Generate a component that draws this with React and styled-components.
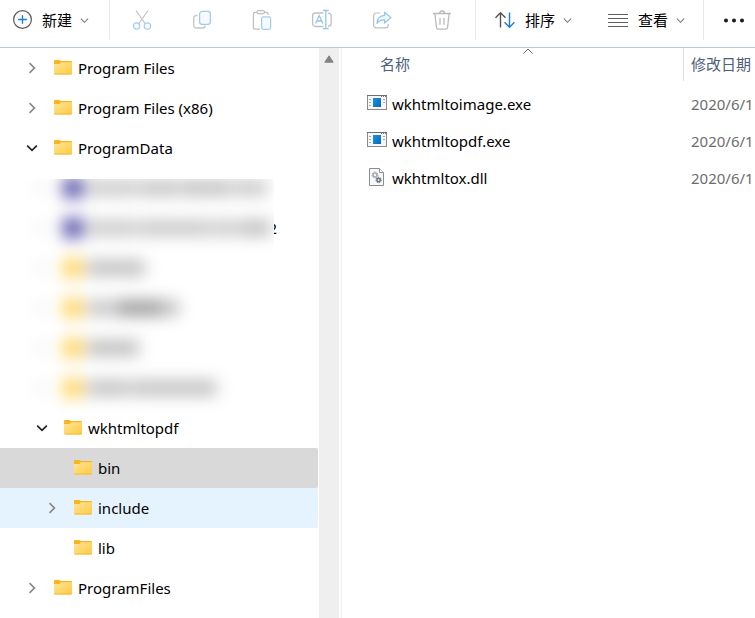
import React, { useState } from 'react';
import styled, { createGlobalStyle, css } from 'styled-components';

const treeTop = [
  { id: 'pf', name: 'Program Files', level: 0, state: 'closed' },
  { id: 'pf86', name: 'Program Files (x86)', level: 0, state: 'closed' },
  { id: 'pd', name: 'ProgramData', level: 0, state: 'open' },
];

const treeBottom = [
  { id: 'wk', name: 'wkhtmltopdf', level: 1, state: 'open' },
  { id: 'bin', name: 'bin', level: 2, state: 'none' },
  { id: 'include', name: 'include', level: 2, state: 'closed', hovered: true },
  { id: 'lib', name: 'lib', level: 2, state: 'none' },
  { id: 'pfs', name: 'ProgramFiles', level: 0, state: 'closed' },
];

// hidden entries: icon tint and word lengths
const hiddenRows = [
  { tint: '#5a54aa', words: [[52, '#cacaca'], [38, '#c4c4c4'], [50, '#c2c2c2'], [34, '#cacaca']] },
  { tint: '#5a54aa', words: [[50, '#cacaca'], [72, '#c8c8c8'], [24, '#cacaca'], [32, '#c0c0c0']] },
  { tint: '#ffd668', words: [[58, '#c0c0c0']] },
  { tint: '#ffd668', words: [[28, '#c6c6c6'], [46, '#9c9c9c'], [14, '#bcbcbc']] },
  { tint: '#ffd668', words: [[52, '#bebebe']] },
  { tint: '#ffd668', words: [[42, '#c2c2c2'], [86, '#c2c2c2']] },
];

const files = [
  { name: 'wkhtmltoimage.exe', kind: 'exe', date: '2020/6/1' },
  { name: 'wkhtmltopdf.exe', kind: 'exe', date: '2020/6/1' },
  { name: 'wkhtmltox.dll', kind: 'dll', date: '2020/6/1' },
];

const Chevron = ({ dir = 'down', size = 9, color = '#777', width = 1.2 }) => {
  const paths = {
    down: 'M1 3 L5 7 L9 3',
    right: 'M3 1 L7 5 L3 9',
  };
  return (
    <svg width={size} height={size} viewBox="0 0 10 10" fill="none" stroke={color} strokeWidth={width} aria-hidden="true">
      <path d={paths[dir]} />
    </svg>
  );
};

const SortCaret = () => (
  <svg width="10" height="6" viewBox="0 0 10 6" fill="none" stroke="#666" aria-hidden="true">
    <path d="M0.5 5.5L5 1L9.5 5.5" />
  </svg>
);

const NewIcon = () => (
  <svg width="20" height="20" viewBox="0 0 20 20" fill="none" aria-hidden="true">
    <circle cx="10.5" cy="9.5" r="8.9" stroke="#5a5a5a" strokeWidth="1.2" fill="#fafafa" />
    <path d="M10.5 5.2v8.6M6.2 9.5h8.6" stroke="#1a7fd4" strokeWidth="1.3" />
  </svg>
);

const CutIcon = () => (
  <svg width="20" height="20" viewBox="0 0 20 20" fill="none" strokeWidth="1.2" aria-hidden="true">
    <path d="M4 0.5 L13 13.5 M16 0.5 L7 13.5" stroke="#c3c3c3" />
    <circle cx="4.6" cy="16" r="3.2" stroke="#9fcdf0" fill="#f4faff" />
    <circle cx="15.4" cy="16" r="3.2" stroke="#9fcdf0" fill="#f4faff" />
  </svg>
);

const CopyIcon = () => (
  <svg width="20" height="20" viewBox="0 0 20 20" fill="none" strokeWidth="1.3" aria-hidden="true">
    <path d="M5.5 5.5H4.3a2.6 2.6 0 0 0-2.6 2.6v7.3a2.6 2.6 0 0 0 2.6 2.6h6.4a2.6 2.6 0 0 0 2.6-2.4" stroke="#c6c6c6" />
    <rect x="7.6" y="1.4" width="10.8" height="13" rx="2.6" stroke="#9fcdf0" fill="#f6fafe" />
  </svg>
);

const PasteIcon = () => (
  <svg width="20" height="20" viewBox="0 0 20 20" fill="none" strokeWidth="1.2" aria-hidden="true">
    <path d="M8 19.2H3a1.6 1.6 0 0 1-1.6-1.6V4A1.6 1.6 0 0 1 3 2.4H5M12.5 2.4H14.5A1.6 1.6 0 0 1 16 4v1" stroke="#bdbdbd" />
    <rect x="5" y="0.7" width="7.5" height="3" rx="1.5" stroke="#bdbdbd" />
    <rect x="9.6" y="6.8" width="9" height="12.5" rx="1.8" stroke="#9fcdf0" fill="#f6fafe" />
  </svg>
);

const RenameIcon = () => (
  <svg width="22" height="22" viewBox="0 0 22 22" fill="none" strokeWidth="1.3" aria-hidden="true">
    <path d="M12.5 4H4.5A3 3 0 0 0 1.6 7v7.5a3 3 0 0 0 3 3h8M17 4.2A3.2 3.2 0 0 1 20.2 7.3v6.9A3.2 3.2 0 0 1 17 17.3" stroke="#c0c0c0" />
    <path d="M4.6 14.5L8.2 6.5L11.8 14.5M5.8 12h4.8" stroke="#93c6ee" />
    <path d="M12 1.5h5.6M12 19.7h5.6M14.8 1.5v18.2" stroke="#93c6ee" />
  </svg>
);

const ShareIcon = () => (
  <svg width="20" height="20" viewBox="0 0 20 20" fill="none" strokeWidth="1.2" strokeLinejoin="round" aria-hidden="true">
    <path d="M8 3H4.2A2.6 2.6 0 0 0 1.6 5.6v9.6a2.6 2.6 0 0 0 2.6 2.6h9.4a2.6 2.6 0 0 0 2.6-2.6v-1.4" stroke="#c0c0c0" />
    <path d="M12.6 2.2L19 7.6L12.6 13V9.9C9 9.8 7 10.6 5 13.4C5.2 8.8 8 5.6 12.6 5.3Z" stroke="#93c6ee" fill="#f0f8ff" />
  </svg>
);

const TrashIcon = () => (
  <svg width="20" height="20" viewBox="0 0 20 20" fill="none" stroke="#bababa" strokeWidth="1.3" aria-hidden="true">
    <path d="M1 3.5h18M7.4 3.2a2.6 2.2 0 0 1 5.2 0M2.9 3.8l1.5 13.4a2 2 0 0 0 2 1.9h7.2a2 2 0 0 0 2-1.9L17.1 3.8M8 8v6.8M12 8v6.8" />
  </svg>
);

const SortIcon = () => (
  <svg width="20" height="20" viewBox="0 0 20 20" fill="none" strokeWidth="1.4" aria-hidden="true">
    <path d="M5.5 17.5V3M0.5 7.8L5.5 2.8L10.5 7.8" stroke="#555" />
    <path d="M14.5 2.5V17M9.5 12.2L14.5 17.2L19.5 12.2" stroke="#1a7fd4" />
  </svg>
);

const ViewIcon = () => (
  <svg width="20" height="20" viewBox="0 0 20 20" fill="none" stroke="#5f5f5f" strokeWidth="1" aria-hidden="true">
    <path d="M0 4.5h20M0 8.5h20M0 12.5h20M0 16.5h20" />
  </svg>
);

const MoreIcon = () => (
  <svg width="20" height="20" viewBox="0 0 20 20" fill="#1c1c1c" aria-hidden="true">
    <circle cx="2" cy="10.5" r="2" />
    <circle cx="10" cy="10.5" r="2" />
    <circle cx="18" cy="10.5" r="2" />
  </svg>
);

const FolderIcon = () => (
  <svg width="20" height="20" viewBox="0 0 20 20" aria-hidden="true">
    <defs>
      <linearGradient id="folderFront" x1="0" y1="0" x2="1" y2="1">
        <stop offset="0" stopColor="#ffe69c" />
        <stop offset="1" stopColor="#ffca3e" />
      </linearGradient>
    </defs>
    <path d="M1 3a1 1 0 0 1 1-1h4.500l1.200 1H18a1 1 0 0 1 1 1V8H1Z" fill="#f8b51f" />
    <path d="M1 6h5.500l1.500-1.800h11V15.500a1 1 0 0 1-1 1H2a1 1 0 0 1-1-1Z" fill="url(#folderFront)" />
    <path d="M1.200 15.600h17.600a1 1 0 0 1-0.800 0.900H2a1 1 0 0 1-0.800-0.900Z" fill="#efb93c" />
  </svg>
);

const ExeIcon = () => (
  <svg width="20" height="20" viewBox="0 0 20 20" aria-hidden="true">
    <defs>
      <linearGradient id="exeScreen" x1="0" y1="0" x2="1" y2="1">
        <stop offset="0" stopColor="#1c93e3" />
        <stop offset="1" stopColor="#0767ba" />
      </linearGradient>
    </defs>
    <rect x="0.5" y="1.500" width="19" height="14" fill="#f7f7f7" stroke="#8a8a8a" />
    <path d="M0 1.500h20" stroke="#6e6e6e" />
    <path d="M14 2.500h1M16 2.500h1M18 2.500h1" stroke="#777" />
    <rect x="6" y="4" width="8" height="9" fill="url(#exeScreen)" />
    <path d="M2 5.500h2M2 8.500h2M2 11.500h2M16 5.500h2M16 8.500h2" stroke="#a8a8a8" />
  </svg>
);

const DllIcon = () => (
  <svg width="20" height="20" viewBox="0 0 20 20" fill="none" aria-hidden="true">
    <path d="M2.5 0.5h10l4 4v13h-14Z" fill="#f8f8f8" stroke="#8d8d8d" />
    <path d="M12.5 0.5v4h4" stroke="#8d8d8d" fill="#fff" />
    <circle cx="8" cy="7" r="2" stroke="#a3adb8" strokeWidth="1.6" />
    <circle cx="8" cy="7" r="3" stroke="#a3adb8" strokeWidth="1" strokeDasharray="1.3 1.3" />
    <circle cx="11.6" cy="12" r="1.7" stroke="#66717c" strokeWidth="1.5" />
    <circle cx="11.6" cy="12" r="2.7" stroke="#66717c" strokeWidth="1" strokeDasharray="1.2 1.1" />
  </svg>
);

const tools = [
  { label: '剪切', Icon: CutIcon },
  { label: '复制', Icon: CopyIcon },
  { label: '粘贴', Icon: PasteIcon },
  { label: '重命名', Icon: RenameIcon },
  { label: '共享', Icon: ShareIcon },
  { label: '删除', Icon: TrashIcon },
];

const TreeItem = ({ item, selected, onSelect }) => (
  <li>
    <TreeButton type="button" $level={item.level} $selected={selected} $hovered={item.hovered} onClick={() => onSelect(item.id)}>
      <Expander>
        {item.state === 'open' && <Chevron dir="down" size={12} color="#222" width={1.4} />}
        {item.state === 'closed' && <Chevron dir="right" size={12} color="#888" width={1.4} />}
      </Expander>
      <FolderIcon />
      <TreeLabel>{item.name}</TreeLabel>
    </TreeButton>
  </li>
);

const App = () => {
  const [selected, setSelected] = useState('bin');

  return (
    <>
      <GlobalStyle />
      <Window>
        <Toolbar>
          <MenuButton type="button" $first>
            <NewIcon />
            <span>新建</span>
            <Chevron />
          </MenuButton>
          <Divider />
          <ToolGroup>
            {tools.map(({ label, Icon }) => (
              <ToolButton key={label} type="button" aria-label={label} disabled>
                <Icon />
              </ToolButton>
            ))}
          </ToolGroup>
          <Divider />
          <MenuButton type="button">
            <SortIcon />
            <span>排序</span>
            <Chevron />
          </MenuButton>
          <MenuButton type="button">
            <ViewIcon />
            <span>查看</span>
            <Chevron />
          </MenuButton>
          <MoreButton type="button" aria-label="更多">
            <MoreIcon />
          </MoreButton>
        </Toolbar>

        <Content>
          <NavPane>
            <TreeList>
              {treeTop.map(item => (
                <TreeItem key={item.id} item={item} selected={selected === item.id} onSelect={setSelected} />
              ))}
            </TreeList>
            <HiddenGroup aria-hidden="true">
              <HiddenRows>
                {hiddenRows.map((row, i) => (
                  <HiddenRow key={i}>
                    <HiddenArrow />
                    <HiddenIcon $tint={row.tint} />
                    {row.words.map(([width, tone], j) => (
                      <HiddenWord key={j} $width={width} $tone={tone} />
                    ))}
                  </HiddenRow>
                ))}
              </HiddenRows>
              <HiddenTail>2</HiddenTail>
            </HiddenGroup>
            <TreeList>
              {treeBottom.map(item => (
                <TreeItem key={item.id} item={item} selected={selected === item.id} onSelect={setSelected} />
              ))}
            </TreeList>
          </NavPane>
          <ScrollTrack>
            <svg width="10" height="8" viewBox="0 0 10 8" aria-hidden="true">
              <path d="M5 0.8L9.2 7.2H0.8Z" fill="#838383" stroke="#838383" strokeLinejoin="round" />
            </svg>
          </ScrollTrack>

          <FilePane>
            <FileTable>
              <thead>
                <tr>
                  <NameHead>
                    <HeadButton type="button">
                      <SortCaret />
                      <HeadLabel>名称</HeadLabel>
                    </HeadButton>
                  </NameHead>
                  <DateHead>
                    <HeadButton type="button" $line>
                      <HeadLabel>修改日期</HeadLabel>
                    </HeadButton>
                  </DateHead>
                </tr>
              </thead>
              <tbody>
                {files.map(file => (
                  <tr key={file.name}>
                    <NameCell>
                      <FileName>
                        {file.kind === 'exe' ? <ExeIcon /> : <DllIcon />}
                        <span>{file.name}</span>
                      </FileName>
                    </NameCell>
                    <DateCell>{file.date}</DateCell>
                  </tr>
                ))}
              </tbody>
            </FileTable>
          </FilePane>
        </Content>
      </Window>
    </>
  );
};

const GlobalStyle = createGlobalStyle`
  * {
    box-sizing: border-box;
  }

  body {
    margin: 0;
    background: #fff;
    color: #000;
    font-family: "Noto Sans", "Noto Sans CJK SC", sans-serif;
    font-size: 15px;
    overflow: hidden;
  }

  button {
    border: 0;
    padding: 0;
    background: none;
    color: inherit;
    font: inherit;
  }

  svg {
    flex: none;
    display: block;
  }
`;

const Window = styled.div`
  display: flex;
  flex-direction: column;
  min-height: 100vh;
`;

const Toolbar = styled.header`
  display: flex;
  height: 48px;
  padding-bottom: 7px;
  border-bottom: 1px solid #b9c9d9;
`;

const MenuButton = styled.button`
  display: flex;
  align-items: center;
  gap: 8px;
  height: 40px;
  padding: ${props => (props.$first ? '0 20px 0 12px' : '0 17px 0 19px')};
  white-space: nowrap;

  span {
    margin-left: 2px;
    padding-bottom: 2px;
  }
`;

const Divider = styled.div`
  flex: none;
  width: 1px;
  height: 40px;
  background: #e8e8e8;
`;

const ToolGroup = styled.div`
  display: flex;
  padding: 0 3px 0 2px;
`;

const ToolButton = styled.button`
  display: flex;
  align-items: center;
  justify-content: center;
  width: 60px;
  height: 40px;
`;

const MoreButton = styled.button`
  display: flex;
  align-items: center;
  height: 40px;
  margin-left: 1px;
  padding-left: 20px;
  border-left: 1px solid #e8e8e8;
`;

const Content = styled.main`
  display: flex;
  flex: 1;
`;

const NavPane = styled.nav`
  flex: 0 0 319px;
  padding-right: 1px;
  overflow: hidden;
`;

const TreeList = styled.ul`
  margin: 0;
  padding: 0;
  list-style: none;
`;

const TreeButton = styled.button`
  display: flex;
  align-items: center;
  width: 100%;
  height: 40px;
  padding-left: ${props => 26 + props.$level * 10}px;
  border-radius: 0 2px 2px 0;

  ${props => props.$hovered && css`
    background: #e5f3ff;
  `}

  ${props => props.$selected && css`
    background: #d9d9d9;
  `}
`;

const Expander = styled.span`
  display: flex;
  width: 27px;
`;

const TreeLabel = styled.span`
  margin-left: 5px;
  white-space: nowrap;
`;

const HiddenGroup = styled.div`
  display: flex;
`;

const HiddenRows = styled.div`
  width: 274px;
  clip-path: inset(11px 0 -5px 0);
`;

const HiddenRow = styled.div`
  display: flex;
  align-items: center;
  gap: 2px;
  height: 40px;
  padding-left: 36px;
  filter: blur(8px);
`;

const HiddenArrow = styled.span`
  flex: none;
  width: 10px;
  height: 12px;
  margin-right: 15px;
  background: #f0f0f0;
`;

const HiddenIcon = styled.span`
  flex: none;
  width: 20px;
  height: 20px;
  margin-right: 2px;
  background: ${props => props.$tint};
`;

const HiddenWord = styled.span`
  flex: none;
  width: ${props => props.$width}px;
  height: 16px;
  background: ${props => props.$tone};
`;

const HiddenTail = styled.span`
  display: flex;
  justify-content: flex-end;
  width: 3px;
  height: 80px;
  padding-top: 40px;
  line-height: 40px;
  overflow: hidden;
`;

const ScrollTrack = styled.div`
  display: flex;
  flex: 0 0 20px;
  justify-content: center;
  padding-top: 7px;
  background: #efefef;
`;

const FilePane = styled.section`
  flex: 1;
  min-width: 0;
  margin-left: 2px;
  border-left: 1px solid #f0f0f0;
`;

const FileTable = styled.table`
  width: 100%;
  table-layout: fixed;
  border-collapse: collapse;
`;

const NameHead = styled.th`
  height: 37px;
  padding: 0 0 0 31px;
  vertical-align: top;
`;

const DateHead = styled.th`
  width: 72px;
  padding: 0;
  vertical-align: top;
`;

const HeadButton = styled.button`
  display: flex;
  flex-direction: column;
  justify-content: ${props => (props.$line ? 'flex-end' : 'flex-start')};
  width: 100%;
  height: 33px;
  padding: ${props => (props.$line ? '0 0 7px' : '0')};
  border-left: ${props => (props.$line ? '1px solid #e0e0e0' : '0')};
  color: #4c607a;
  font-weight: 400;
  line-height: 20px;
  text-align: left;
  white-space: nowrap;

  svg {
    align-self: center;
  }
`;

const HeadLabel = styled.span`
  padding-left: 7px;
`;

const NameCell = styled.td`
  height: 37px;
  padding: 0 0 0 25px;
`;

const FileName = styled.div`
  display: flex;
  align-items: center;
  gap: 5px;
  white-space: nowrap;
`;

const DateCell = styled.td`
  padding: 0 0 0 8px;
  color: #6d6d6d;
  white-space: nowrap;
`;

export default App;
